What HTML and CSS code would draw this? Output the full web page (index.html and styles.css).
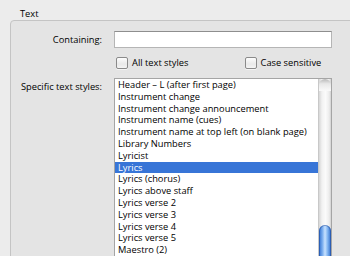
FILE: index.html
```html
<!DOCTYPE html>
<html>
<head>
<meta charset="utf-8">
<link rel="stylesheet" href="styles.css">
</head>
<body>
<div class="page">
  <div class="group-title">Text</div>
  <div class="group">
    <div class="form">
      <label class="label">Containing:</label>
      <div class="input"></div>

      <div></div>
      <div class="checks">
        <label class="check"><span class="box"></span>All text styles</label>
        <label class="check"><span class="box"></span>Case sensitive</label>
      </div>

      <label class="label label-top">Specific text styles:</label>
      <div class="list">
        <ul class="items">
          <li>Header – L (after first page)</li>
          <li>Instrument change</li>
          <li>Instrument change announcement</li>
          <li>Instrument name (cues)</li>
          <li>Instrument name at top left (on blank page)</li>
          <li>Library Numbers</li>
          <li>Lyricist</li>
          <li class="selected">Lyrics</li>
          <li>Lyrics (chorus)</li>
          <li>Lyrics above staff</li>
          <li>Lyrics verse 2</li>
          <li>Lyrics verse 3</li>
          <li>Lyrics verse 4</li>
          <li>Lyrics verse 5</li>
          <li>Maestro (2)</li>
        </ul>
        <div class="scrollbar">
          <div class="cap"></div>
          <div class="thumb"></div>
        </div>
      </div>
    </div>
  </div>
</div>
</body>
</html>
```

FILE: styles.css
```css
html, body {
  margin: 0;
  padding: 0;
  background: #ececec;
  overflow: hidden;
  width: 350px;
  height: 256px;
}
.page {
  font-family: "Open Sans", "DejaVu Sans", sans-serif;
  font-size: 9.3px;
  color: #000;
  padding-top: 8px;
}
.group-title {
  margin-left: 20px;
  height: 12px;
  line-height: 12px;
}
.group {
  margin-left: 10px;
  width: 360px;
  height: 260px;
  border: 1px solid #c4c4c4;
  border-radius: 4px;
  background: #e4e4e4;
  box-sizing: border-box;
}
.form {
  display: grid;
  grid-template-columns: 91px 218px;
  column-gap: 12px;
  row-gap: 9px;
  padding-top: 10px;
}
.label {
  text-align: right;
  line-height: 17px;
}
.label-top {
  line-height: 13px;
  padding-top: 2px;
}
.input {
  height: 17px;
  box-sizing: border-box;
  background: #fff;
  border: 1px solid #b5b5b5;
  border-top-color: #8e8e8e;
}
.checks {
  display: flex;
  height: 12px;
  padding-left: 2px;
}
.check {
  display: flex;
  align-items: center;
  gap: 4px;
  line-height: 12px;
}
.check + .check {
  margin-left: 56px;
}
.box {
  width: 12px;
  height: 12px;
  box-sizing: border-box;
  border: 1px solid #8a8a8a;
  border-radius: 2px;
  background: linear-gradient(#fdfdfd, #e9e9e9 60%, #f4f4f4);
  box-shadow: 0 1px 0 rgba(255,255,255,0.6);
}
.list {
  display: flex;
  height: 190px;
  background: #fff;
  border: 1px solid #a5a5a5;
  border-bottom: none;
  box-sizing: border-box;
}
.items {
  list-style: none;
  margin: 0;
  padding: 0;
  flex: 1;
}
.items li {
  height: 11.8px;
  line-height: 11.8px;
  padding-left: 3px;
  white-space: nowrap;
}
.items li.selected {
  background: #3875d7;
  color: #fff;
}
.scrollbar {
  width: 12px;
  position: relative;
  background: linear-gradient(90deg, #d6d6d6, #f2f2f2 25%, #fbfbfb 55%, #ececec 85%, #d2d2d2);
  border-left: 1px solid #c8c8c8;
}
.cap {
  height: 12px;
  border-radius: 6px 6px 0 0;
  background: linear-gradient(#b8b8b8, #e8e8e8 40%, #fafafa);
}
.thumb {
  position: absolute;
  left: 0;
  right: 0;
  top: 146px;
  bottom: -20px;
  border-radius: 6px 6px 0 0;
  background: linear-gradient(90deg, #2f6fd0, #7fb1f0 30%, #c8e2ff 50%, #86b8f2 70%, #2e6ccb);
  box-shadow: inset 0 0 0 1px rgba(30,70,150,0.5);
}
```
